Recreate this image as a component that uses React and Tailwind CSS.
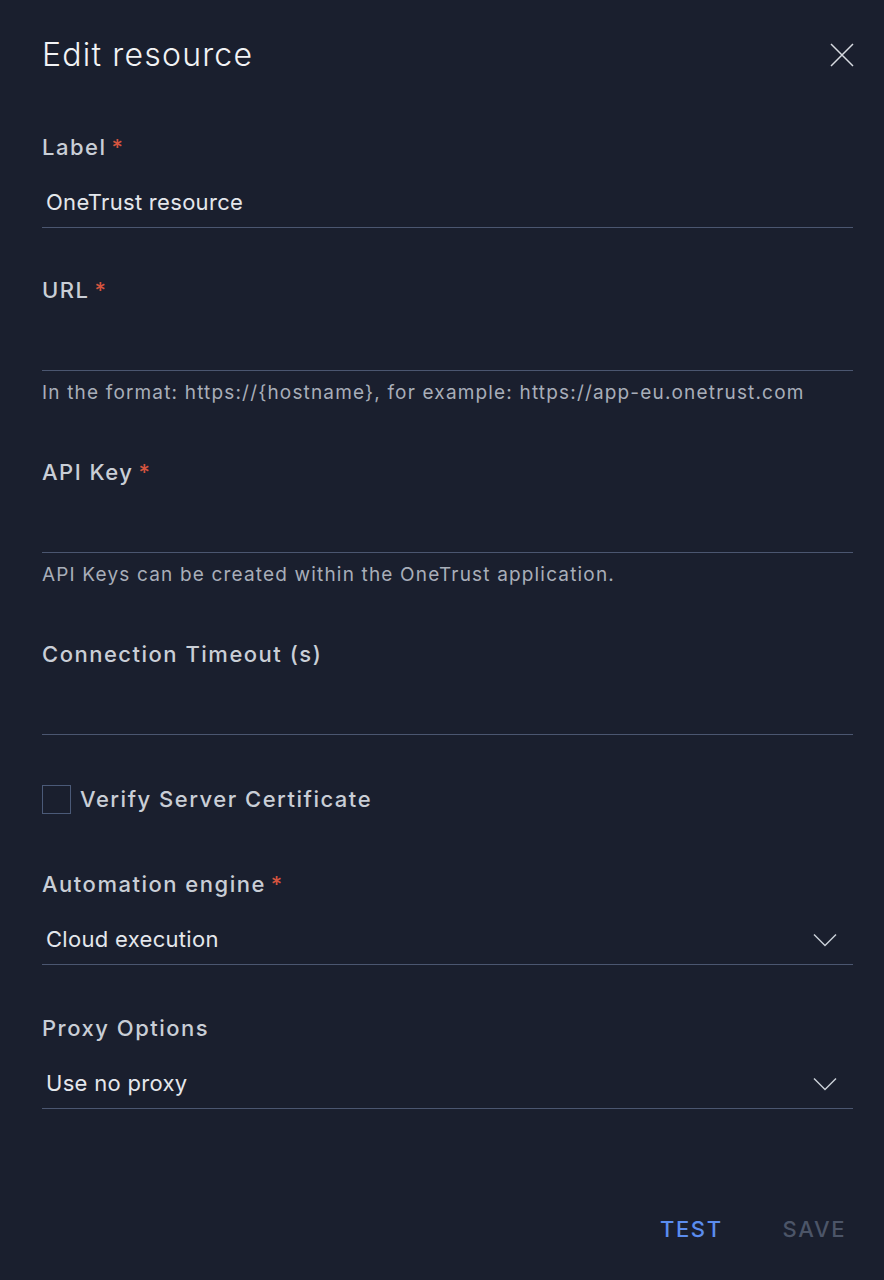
import React, { useState } from 'react';

const font = { fontFamily: "Inter, 'Noto Sans', sans-serif" };

function Label({ children, required }) {
  return (
    <div className="h-[30px] flex items-center text-[22px] font-medium text-[#c9ced6] tracking-[1.5px]">
      {children}
      {required && <span className="ml-[5px] text-[#d4543f]">*</span>}
    </div>
  );
}

function Field({ label, required, value, helper, select }) {
  return (
    <div>
      <Label required={required}>{label}</Label>
      <div className="mt-[16px] h-[50px] flex items-center justify-between border-b border-[#4b5670] pl-[4px] pr-[16px]">
        <span className="text-[22px] text-[#e4e7ec] tracking-[0.3px]">{value}</span>
        {select && (
          <svg width="24" height="14" viewBox="0 0 24 14" fill="none" stroke="#c9ced6" strokeWidth="1.5">
            <path d="M1 1.5 L12 12.5 L23 1.5" />
          </svg>
        )}
      </div>
      {helper && <div className="mt-[11px] h-[22px] flex items-center text-[19px] text-[#a8aeb9] tracking-[1.17px]">{helper}</div>}
    </div>
  );
}

export default function App() {
  const [verify, setVerify] = useState(false);

  return (
    <div className="w-[884px] h-[1280px] bg-[#1a1f2e] pl-[42px] pr-[31px] flex flex-col" style={font}>
      {/* Header */}
      <div className="mt-[34px] h-[42px] flex items-center justify-between">
        <h1 className="text-[32px] font-light text-[#f2f3f5] tracking-[1.2px]">Edit resource</h1>
        <svg width="24" height="24" viewBox="0 0 24 24" fill="none" stroke="#d7dbe1" strokeWidth="1.5" className="mr-[-1px]">
          <path d="M1 1 L23 23 M23 1 L1 23" />
        </svg>
      </div>

      <div className="mt-[56px]">
        <Field label="Label" required value="OneTrust resource" />
      </div>
      <div className="mt-[47px]">
        <Field
          label="URL"
          required
          value=""
          helper="In the format: https://{hostname}, for example: https://app-eu.onetrust.com"
        />
      </div>
      <div className="mt-[53px]">
        <Field label="API Key" required value="" helper="API Keys can be created within the OneTrust application." />
      </div>
      <div className="mt-[53px]">
        <Field label="Connection Timeout (s)" value="" />
      </div>

      <label className="mt-[48px] flex items-center gap-[9px] cursor-pointer">
        <span
          onClick={() => setVerify(!verify)}
          className="w-[29px] h-[29px] border border-[#4b5a78] flex items-center justify-center"
        >
          {verify && (
            <svg width="16" height="12" viewBox="0 0 16 12" fill="none" stroke="#5b8def" strokeWidth="2">
              <path d="M1 6 L6 11 L15 1" />
            </svg>
          )}
        </span>
        <span className="text-[22px] font-medium text-[#c9ced6] tracking-[1.5px]">Verify Server Certificate</span>
      </label>

      <div className="mt-[53px]">
        <Field label="Automation engine" required value="Cloud execution" select />
      </div>
      <div className="mt-[48px]">
        <Field label="Proxy Options" value="Use no proxy" select />
      </div>

      <div className="mt-[104px] flex justify-end gap-[60px] pr-[7px]">
        <button className="text-[22px] font-medium text-[#5b8def] tracking-[1.6px]">TEST</button>
        <button className="text-[22px] font-medium text-[#4c5568] tracking-[1.6px]">SAVE</button>
      </div>
    </div>
  );
}
